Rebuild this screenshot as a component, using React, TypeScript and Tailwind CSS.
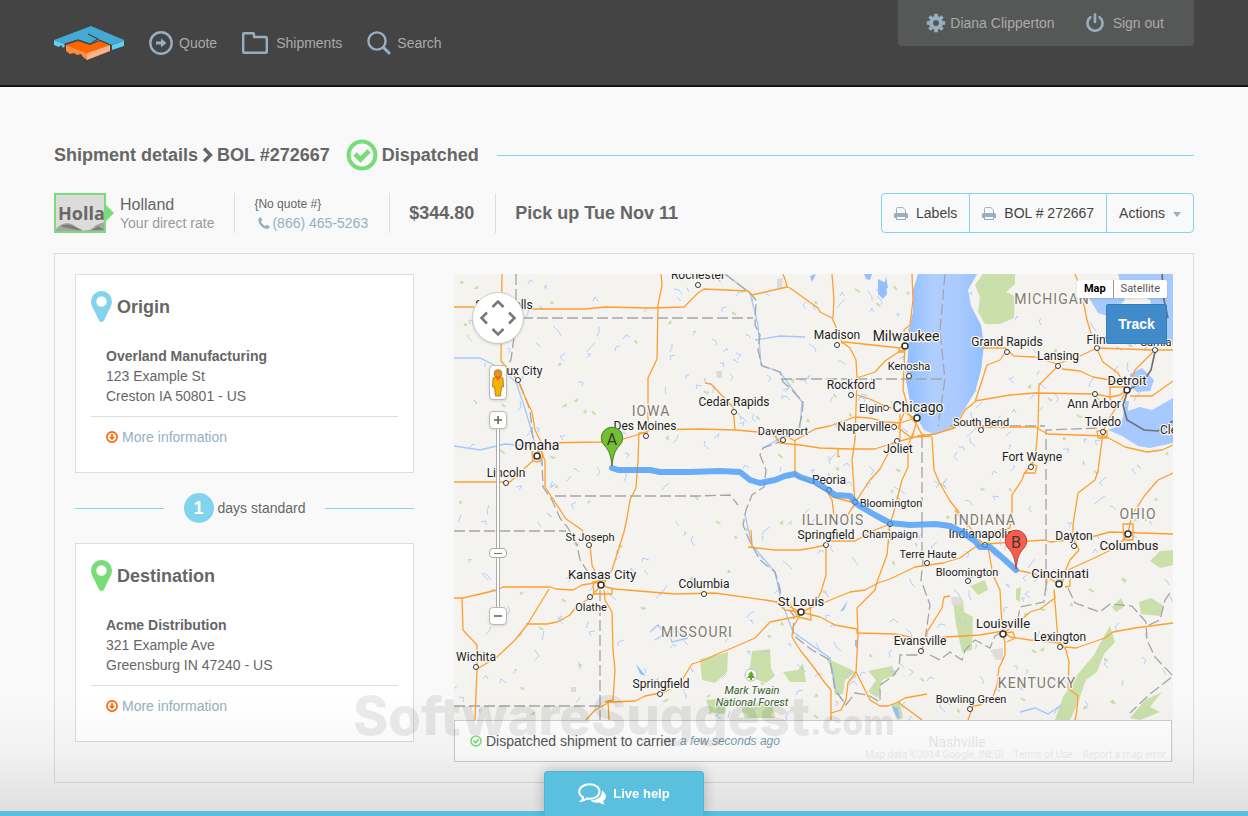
import type { ReactNode } from 'react';

interface Stop {
  title: string;
  pinClass: string;
  company: string;
  street: string;
  city: string;
}

interface City {
  name: string;
  x: number;
  y: number;
  size: number;
  dot?: [number, number];
}

const stops: Stop[] = [
  {
    title: 'Origin',
    pinClass: 'text-[#82d4ed]',
    company: 'Overland Manufacturing',
    street: '123 Example St',
    city: 'Creston IA 50801 - US',
  },
  {
    title: 'Destination',
    pinClass: 'text-[#78dd78]',
    company: 'Acme Distribution',
    street: '321 Example Ave',
    city: 'Greensburg IN 47240 - US',
  },
];

const cities: City[] = [
  { name: 'Rochester', x: 698, y: 279, size: 12, dot: [698, 285] },
  { name: 'Sioux Falls', x: 504, y: 309, size: 12 },
  { name: 'Sioux City', x: 516, y: 375, size: 12, dot: [518, 380] },
  { name: 'Des Moines', x: 645, y: 430, size: 12, dot: [646, 436] },
  { name: 'Omaha', x: 537, y: 450, size: 14, dot: [537, 456] },
  { name: 'Lincoln', x: 506, y: 477, size: 12, dot: [506, 483] },
  { name: 'Cedar Rapids', x: 734, y: 406, size: 12, dot: [734, 412] },
  { name: 'Davenport', x: 783, y: 435, size: 11, dot: [783, 440] },
  { name: 'Madison', x: 837, y: 339, size: 12, dot: [837, 345] },
  { name: 'Milwaukee', x: 906, y: 341, size: 14, dot: [905, 346] },
  { name: 'Kenosha', x: 909, y: 370, size: 11, dot: [909, 376] },
  { name: 'Rockford', x: 851, y: 389, size: 12, dot: [851, 395] },
  { name: 'Elgin', x: 871, y: 412, size: 11, dot: [886, 408] },
  { name: 'Chicago', x: 918, y: 412, size: 14, dot: [917, 418] },
  { name: 'Naperville', x: 864, y: 431, size: 12, dot: [894, 427] },
  { name: 'Joliet', x: 898, y: 453, size: 12, dot: [897, 441] },
  { name: 'Peoria', x: 829, y: 484, size: 12, dot: [829, 490] },
  { name: 'Bloomington', x: 891, y: 507, size: 11, dot: [855, 502] },
  { name: 'Springfield', x: 826, y: 539, size: 12, dot: [826, 545] },
  { name: 'Champaign', x: 890, y: 538, size: 11, dot: [890, 524] },
  { name: 'Terre Haute', x: 928, y: 558, size: 11, dot: [927, 563] },
  { name: 'Bloomington', x: 967, y: 576, size: 11, dot: [968, 581] },
  { name: 'Indianapolis', x: 981, y: 538, size: 12, dot: [985, 545] },
  { name: 'Grand Rapids', x: 1007, y: 346, size: 12, dot: [1007, 352] },
  { name: 'Lansing', x: 1058, y: 360, size: 12, dot: [1058, 366] },
  { name: 'Flint', x: 1098, y: 344, size: 12, dot: [1097, 348] },
  { name: 'Sarnia', x: 1156, y: 346, size: 11, dot: [1155, 350] },
  { name: 'Detroit', x: 1127, y: 385, size: 13, dot: [1127, 390] },
  { name: 'Ann Arbor', x: 1094, y: 408, size: 12, dot: [1095, 394] },
  { name: 'Toledo', x: 1103, y: 426, size: 12, dot: [1103, 432] },
  { name: 'South Bend', x: 981, y: 426, size: 11, dot: [981, 430] },
  { name: 'Fort Wayne', x: 1032, y: 461, size: 12, dot: [1031, 467] },
  { name: 'Cleveland', x: 1186, y: 434, size: 12 },
  { name: 'Dayton', x: 1074, y: 540, size: 12, dot: [1074, 546] },
  { name: 'Columbus', x: 1129, y: 550, size: 13, dot: [1128, 534] },
  { name: 'Cincinnati', x: 1060, y: 578, size: 13, dot: [1059, 584] },
  { name: 'Louisville', x: 1003, y: 628, size: 13, dot: [1003, 634] },
  { name: 'Lexington', x: 1060, y: 641, size: 12, dot: [1060, 647] },
  { name: 'Evansville', x: 920, y: 645, size: 12, dot: [921, 651] },
  { name: 'Bowling Green', x: 971, y: 703, size: 11, dot: [970, 709] },
  { name: 'Nashville', x: 957, y: 747, size: 14 },
  { name: 'St Joseph', x: 590, y: 541, size: 11, dot: [589, 545] },
  { name: 'Kansas City', x: 602, y: 579, size: 13, dot: [601, 585] },
  { name: 'Olathe', x: 591, y: 611, size: 11, dot: [590, 597] },
  { name: 'Columbia', x: 704, y: 588, size: 12, dot: [704, 594] },
  { name: 'St Louis', x: 801, y: 606, size: 13, dot: [801, 612] },
  { name: 'Wichita', x: 476, y: 661, size: 12, dot: [476, 667] },
  { name: 'Springfield', x: 661, y: 688, size: 12, dot: [660, 694] },
];

const states = [
  { name: 'IOWA', x: 651, y: 416 },
  { name: 'ILLINOIS', x: 833, y: 525 },
  { name: 'INDIANA', x: 985, y: 525 },
  { name: 'OHIO', x: 1138, y: 519 },
  { name: 'MICHIGAN', x: 1052, y: 304 },
  { name: 'MISSOURI', x: 697, y: 637 },
  { name: 'KENTUCKY', x: 1037, y: 688 },
];

const roads = [
  'M454 307H500L517 309H585L605 307L650 308L684 307L698 293L704 289L748 291L752 295L787 287L790 288L818 308L820 312L832 318L834 322L842 342L850 348L856 360L857 378L855 440L852 460L855 503',
  'M783 274L786 282L787 287M832 274L834 300L833 318',
  'M502 274L501 361L510 371L518 381L524 395L532 412L535 430L541 442L542 455L545 460L545 487L553 499L566 519L572 523L582 530L590 545L592 565L600 583',
  'M661 274L662 285L658 305L657 359L648 378L648 430L647 433L639 433L638 460L636 488L630 500L627 518L624 532L612 570L604 583',
  'M454 482H510L525 468L538 456L542 443L600 442L620 440L640 434L650 430L700 429L736 430L758 432L775 436L780 443L800 445L820 448L850 449L875 449L893 443L915 437L932 436',
  'M532 452Q540 446 543 455Q541 464 533 461ZM779 434L788 437L795 441V475L815 485L828 492L833 497L855 503M794 441L815 429L830 426L855 417L870 418L885 422L900 423L912 419M838 449V457L840 456',
  'M705 383L711 384L733 407L735 430M841 343L845 342L900 348L903 345M857 378L875 372L885 361L900 351L904 350M857 395L870 399L885 406L905 412L917 420',
  'M912 274L913 300L910 325L904 330L905 345L903 390L906 400L907 412L917 425L921 433L925 436M899 348V352H904M900 414V440M905 410L898 428L912 438L917 420M893 444L880 469L870 480L862 492L855 503M913 433L908 446V467L902 480L893 515L890 523L887 555L877 582',
  'M826 545L830 541L855 541L875 530L890 524M748 547L775 550L800 550L812 548L826 545M751 530L752 547M826 545V575L821 592L815 605L804 611M828 493L832 500L834 515M855 503L846 518',
  'M454 598L463 598L497 590L503 587H550L556 589L573 590L582 585L601 582L606 587L615 589L675 594L715 593L765 600L777 602L790 607L801 612L850 592L865 590L878 583L890 579L915 567L943 563L960 558L975 547L985 544L1045 540L1050 542L1085 538L1095 536L1110 532L1173 534',
  'M549 589L527 625L515 640L497 657L477 669L475 720M462 598L463 630L477 645V669M526 624L547 624L557 622L570 615L576 607L590 598L602 584M612 588V594L594 594L593 582L605 580',
  'M604 590L605 600L612 612L613 650L615 670L613 700L605 702M586 720L595 710L610 702L635 701L645 696L665 692L680 683L692 664L705 660L715 655L722 652L732 648L755 638L770 622L795 617L803 614M608 700L609 720',
  'M801 612L820 617L835 625L857 629L857 633L895 634L925 640L945 637L980 635L1003 631L1010 637L1030 640L1060 643M800 615L793 627L792 637L800 650L812 665L825 683L831 690V720M790 604L798 617L811 620L810 606M776 602L785 610L801 612',
  'M877 582L875 590L857 608L858 635L856 672L870 700L880 706L888 706L898 702L922 720M856 672L848 683L846 700L841 710L831 713M898 702L905 698L927 694M926 641L927 632L942 608L944 597L950 596',
  'M988 547L993 575L1000 590L1001 610L1003 633L1005 643L1005 655L999 668L997 685L993 697L980 705L973 706L968 720M1004 633L1013 632L1015 638L1007 642M1005 632L1020 621L1030 612L1040 609L1055 598L1054 590L1058 640L1066 650L1069 662L1068 688L1078 696L1077 710L1075 720M1065 647L1076 648L1105 638L1113 632L1135 628L1173 623',
  'M1016 570L1045 576L1059 584M1060 583L1070 560L1079 550L1073 538L1073 525L1078 493L1095 480L1098 471L1102 440L1103 432M1062 583L1068 570L1090 560L1115 548L1128 535M1128 533L1132 515L1145 495L1158 480L1173 473M1046 585L1047 578L1055 577M1065 587L1070 586L1070 578M1123 524H1133V540H1124Z',
  'M988 545L992 532L1010 528L1012 512L1012 495L1022 480L1024 474L1033 462L1036 450L1038 427L1039 385L1046 378L1058 366M1024 473L1035 473L1037 466L1030 463',
  'M917 436L935 434L960 425L978 427L1035 427L1048 434L1105 436L1125 447L1147 452L1162 450L1173 445M935 434L955 428L965 410L975 402L987 365L1000 360L1007 350M975 401L1010 395L1035 393L1095 394L1110 397L1120 395L1127 390',
  'M982 348L1005 348L1014 356L1035 357L1057 364L1080 356L1097 348L1155 350H1173M1062 369L1080 371L1093 377L1110 380L1120 386M1075 274L1080 287L1084 305L1087 320L1093 340L1097 349L1103 362L1118 373L1127 390L1118 405L1108 420L1103 432M1155 350L1135 370L1129 385M1130 396H1152L1173 381M1110 386V398L1114 407M1109 387H1126M1097 431H1107V438H1098Z',
  'M932 437L934 470L939 482L950 501L963 517L975 535L984 545M955 510L968 527',
];

const borders = [
  'M516 274V311M514 337L511 360L508 364M522 318H753M555 496L697 496L730 495L738 505M454 531H566M454 706H600M600 590V720',
  'M781 379H945L938 426M922 437V560M950 426H1045M1046 585V430L1100 428M945 274L940 330L945 380',
  'M520 384L530 410L533 440L542 460L543 487L552 500L560 518L568 528L577 545L580 560L588 572',
  'M725 274L750 293L756 300L755 325L760 335L758 350L762 366L780 372L783 382L790 388L803 402L802 415L799 427L785 440L763 448L760 455L766 470L764 487L752 495L746 510L743 525L750 542L760 560L775 572L779 585L782 600L794 616L793 635L812 650L830 660L835 690L846 705L855 693L868 695L880 702L880 685L892 677L899 668L900 655L920 655L925 640L930 605L921 580L923 560',
  'M930 655L940 660L950 652L962 660L965 650L975 640L990 648L995 636L1000 633M1046 585L1044 602L1020 607L1017 625M1068 588L1075 603L1100 612L1110 604L1132 606L1146 622L1147 640L1155 657L1173 676L1150 694L1130 713M1149 625L1160 620L1165 600L1172 590',
];

const forests = [
  'M983 274L975 285L980 297L978 312L985 324H1000L1014 318L1015 296L1006 292L1015 284V274Z',
  'M700 659L728 652L727 672L715 683L702 680Z',
  'M752 651L770 649L771 668L775 676L766 683L745 675L750 667Z',
  'M783 672L798 670L803 663L806 682L790 682Z',
  'M706 700L728 698L725 714L710 712ZM742 710L748 702L772 705L775 718H745Z',
  'M826 658L850 669L856 672L845 680L843 694L835 695L831 668Z',
  'M868 671L892 666L896 675L882 680L878 698L868 692L876 680Z',
  'M953 601L963 600L964 612L973 617L972 650L962 652L956 625Z',
  'M1110 626L1115 642L1104 654L1097 672L1086 680L1077 705L1070 720H1055L1063 697L1078 674L1094 655L1102 640Z',
  'M1139 602L1151 598L1164 606L1160 616L1141 614Z',
  'M1112 607L1121 598L1125 606L1116 612Z',
  'M1150 561L1160 551L1173 550V565L1160 568Z',
  'M970 586L985 580L988 590L978 595ZM1016 589L1021 587L1020 602L1016 600Z',
  'M1130 718L1145 700L1162 692L1150 707L1160 712L1140 720Z',
  'M891 705L900 702L903 718L897 720Z',
];

// cheap repeatable noise, keeps the small creeks and woods in place between renders
const scatter = (count: number, seed: number) => {
  let value = seed;
  const next = () => {
    value = (value * 16807) % 2147483647;
    return value / 2147483647;
  };
  return Array.from({ length: count }, () => {
    const x = 456 + Math.round(next() * 712);
    const y = 276 + Math.round(next() * 440);
    return { x, y, a: Math.round(next() * 12 - 6), b: Math.round(next() * 10 - 4), c: Math.round(next() * 10 - 5) };
  });
};

const creeks = scatter(330, 4711);
const woods = scatter(120, 977);

function Logo() {
  return (
    <svg viewBox="0 0 70 34" className="w-[70px] h-[34px]" aria-label="Home">
      <path d="M0 14L37 0L70 14V15L57 19L46 14L36 18L24 14L10 18Z" fill="#44a9d3" />
      <path d="M0 14L10 18L11 20L9 22L7 19L5 21L0 19Z" fill="#62d0f0" />
      <path d="M70 15V20L58 24V19Z" fill="#62d0f0" />
      <path d="M12 19L24 15L36 19L46 15L56 19L33 27Z" fill="#ff6600" />
      <path d="M12 19L33 27V34L29 31L27 28L23 29L20 27L16 28L12 25Z" fill="#ff8b3d" />
      <path d="M56 19V25L33 34V27Z" fill="#ffb184" />
      <path d="M34 8L44 13L36 18L24 14L11 18M45 14L57 19" fill="none" stroke="#444" strokeWidth="1.3" />
    </svg>
  );
}

function QuoteIcon() {
  return (
    <svg viewBox="0 0 24 24" className="w-6 h-6" fill="none" stroke="currentColor">
      <circle cx="12" cy="12" r="10.7" strokeWidth="2.4" />
      <path d="M7 12h6" strokeWidth="3" />
      <path d="M12 7.5L17.5 12L12 16.5Z" fill="currentColor" stroke="none" />
    </svg>
  );
}

function FolderIcon() {
  return (
    <svg viewBox="0 0 26 22" className="w-[26px] h-[22px]" fill="none" stroke="currentColor" strokeWidth="2.4" strokeLinejoin="round">
      <path d="M1.2 2.2Q1.2 1.2 2.2 1.2H11Q12 1.2 12 2.2V5H23.8Q24.8 5 24.8 6V19.8Q24.8 20.8 23.8 20.8H2.2Q1.2 20.8 1.2 19.8Z" />
    </svg>
  );
}

function SearchIcon() {
  return (
    <svg viewBox="0 0 24 24" className="w-6 h-6" fill="none" stroke="currentColor" strokeLinecap="round">
      <circle cx="10" cy="10" r="8.6" strokeWidth="2.4" />
      <path d="M16.5 16.5L22 22" strokeWidth="3" />
    </svg>
  );
}

function GearIcon() {
  return (
    <svg viewBox="0 0 20 20" className="w-5 h-5" fill="none" stroke="currentColor">
      <circle cx="10" cy="10" r="5" strokeWidth="4" />
      <path
        d="M10 .8V4M10 16V19.2M.8 10H4M16 10H19.2M3.5 3.5L5.8 5.8M14.2 14.2L16.5 16.5M3.5 16.5L5.8 14.2M14.2 5.8L16.5 3.5"
        strokeWidth="3.6"
      />
    </svg>
  );
}

function PowerIcon() {
  return (
    <svg viewBox="0 0 20 20" className="w-5 h-5" fill="none" stroke="currentColor" strokeWidth="2.6" strokeLinecap="round">
      <path d="M5.4 4.2A7.6 7.6 0 1 0 14.6 4.2" />
      <path d="M10 1.5V9" />
    </svg>
  );
}

function CheckCircle({ className }: { className: string }) {
  return (
    <svg viewBox="0 0 32 32" className={className} fill="none" stroke="#78dd78">
      <circle cx="16" cy="16" r="13.4" strokeWidth="4" />
      <path d="M9 15L14.5 20.5L23 12" strokeWidth="4.6" />
    </svg>
  );
}

function PinIcon({ className }: { className: string }) {
  return (
    <svg viewBox="0 0 21 31" className={`w-[21px] h-[31px] ${className}`}>
      <path
        fillRule="evenodd"
        fill="currentColor"
        d="M10.5 0A10.4 10.4 0 0 1 21 10.5C21 14 19 17.5 17.5 20L13 29.5Q10.5 32.5 8 29.5L3.5 20C2 17.5 0 14 0 10.5A10.4 10.4 0 0 1 10.5 0ZM10.5 5.3A5.2 5.2 0 1 0 10.5 15.7A5.2 5.2 0 1 0 10.5 5.3Z"
      />
    </svg>
  );
}

function PrinterIcon() {
  return (
    <svg viewBox="0 0 14 13" className="w-[14px] h-[13px]" fill="#97afc1">
      <path d="M2.5 6V1.5Q2.5 .6 3.4 .6H9L11.5 3V6" fill="none" stroke="#97afc1" />
      <path fillRule="evenodd" d="M1.5 6H12.5Q14 6 14 7.5V11H12V13H2V11H0V7.5Q0 6 1.5 6ZM3 10V12H11V10Z" />
    </svg>
  );
}

function PhoneIcon() {
  return (
    <svg viewBox="0 0 12 12" className="w-3 h-3" fill="currentColor">
      <path d="M.4 2.2C.8 .8 2 .2 3 .2L4.3 3.4L2.9 4.6C3.7 6.5 5.3 8.2 7.3 9L8.6 7.7L11.8 9.3C11.7 10.6 10.8 11.6 9.5 11.8C4.5 12 0 7 .4 2.2Z" />
    </svg>
  );
}

function DownCircle() {
  return (
    <svg viewBox="0 0 12 12" className="w-3 h-3" fill="none" stroke="#ff6600">
      <circle cx="6" cy="6" r="5.1" strokeWidth="1.6" />
      <path d="M6 2.8V6.5" strokeWidth="1.6" />
      <path d="M3 5.8H9L6 9.2Z" fill="#ff6600" stroke="none" />
    </svg>
  );
}

function ChatIcon() {
  return (
    <svg viewBox="0 0 28 22" className="w-7 h-[22px]">
      <path
        d="M11.5 1.2C17 1.2 21.5 4.4 21.5 8.5S17 15.8 11.5 15.8L9 15.6Q6.5 17.8 3.5 17.8Q5.3 16.2 5.2 14.4C2.7 13 1.2 11 1.2 8.5C1.2 4.4 6 1.2 11.5 1.2Z"
        fill="none"
        stroke="white"
        strokeWidth="2"
      />
      <path d="M24 7.5C29 11 29 15.5 25.2 18Q25.2 20 26.8 21.5Q23.5 21.5 21.5 19.5C18 20.2 14.5 19.5 12.5 17.5C19 17.5 24.5 13.5 24 7.5Z" fill="white" />
    </svg>
  );
}

function HollandLogo() {
  return (
    <div className="relative w-[52px] h-10 shrink-0">
      <div className="w-full h-full overflow-hidden border-2 border-[#78dd78] bg-[#dcdcdc]">
        <svg viewBox="0 0 48 36" className="w-12 h-9">
          <text x="2" y="25" fontFamily="Open Sans, sans-serif" fontWeight="700" fontSize="18" fill="#6b6767">
            Holla
          </text>
          <path d="M0 34Q10 23 20 32T40 30L48 27V36H0Z" fill="#a5a5a5" />
          <path d="M4 31Q12 27 22 33T42 31L48 35H30Q20 36 4 31Z" fill="#7d7d7d" />
        </svg>
      </div>
      <span className="absolute left-full top-3 border-y-8 border-l-8 border-y-transparent border-l-[#78dd78]" />
    </div>
  );
}

function Header() {
  return (
    <header className="bg-[#444] border-b-2 border-[#151515]">
      <div className="max-w-[1140px] mx-auto flex items-start justify-between">
        <nav className="h-[85px] flex items-center gap-[25px] text-[#aaa]">
          <a href="#home"><Logo /></a>
          <a href="#quote" className="flex items-center gap-1.5">
            <span className="text-[#97afc1]"><QuoteIcon /></span>
            Quote
          </a>
          <a href="#shipments" className="flex items-center gap-2">
            <span className="text-[#97afc1]"><FolderIcon /></span>
            Shipments
          </a>
          <a href="#search" className="flex items-center gap-1.5">
            <span className="text-[#97afc1]"><SearchIcon /></span>
            Search
          </a>
        </nav>
        <div className="h-[46px] flex items-center gap-[30px] pl-7 pr-[30px] rounded-b bg-[#565857] text-[#aaa]">
          <a href="#account" className="flex items-center gap-1">
            <span className="text-[#97afc1]"><GearIcon /></span>
            Diana Clipperton
          </a>
          <a href="#signout" className="flex items-center gap-2">
            <span className="text-[#97afc1]"><PowerIcon /></span>
            Sign out
          </a>
        </div>
      </div>
    </header>
  );
}

function TitleRow() {
  return (
    <div className="h-8 flex items-center text-lg font-bold text-[#666]">
      <h1 className="flex items-center gap-1">
        Shipment details
        <svg viewBox="0 0 11 16" className="w-[11px] h-4" fill="none" stroke="currentColor" strokeWidth="3.4">
          <path d="M2 1.5L8.5 8L2 14.5" />
        </svg>
        BOL #272667
      </h1>
      <CheckCircle className="w-8 h-8 ml-4 mr-1" />
      <span>Dispatched</span>
      <div className="flex-1 h-px ml-[18px] bg-[#82d4ed]" />
    </div>
  );
}

function Cell({ children }: { children: ReactNode }) {
  return <div className="h-10 flex items-center px-[19px] border-l border-[#ddd]">{children}</div>;
}

function SummaryRow() {
  return (
    <div className="mt-[22px] flex items-center justify-between text-[#666]">
      <div className="flex items-center">
        <HollandLogo />
        <div className="pl-[14px] pr-5">
          <p className="text-base leading-5">Holland</p>
          <p className="leading-4 text-[#999]">Your direct rate</p>
        </div>
        <Cell>
          <div className="pr-0.5">
            <p className="text-xs leading-5">{'{No quote #}'}</p>
            <a href="tel:8664655263" className="flex items-center gap-0.5 pl-1 leading-[18px] text-[#97afc1]">
              <PhoneIcon />
              (866) 465-5263
            </a>
          </div>
        </Cell>
        <Cell><strong className="text-lg pr-0.5">$344.80</strong></Cell>
        <Cell><strong className="text-lg">Pick up Tue Nov 11</strong></Cell>
      </div>
      <div className="h-10 flex rounded-sm border border-[#82d4ed] divide-x divide-[#82d4ed] text-[#444]">
        <button className="flex items-center gap-2 px-3">
          <PrinterIcon />
          Labels
        </button>
        <button className="flex items-center gap-2 px-3">
          <PrinterIcon />
          BOL # 272667
        </button>
        <button className="flex items-center gap-2 px-3">
          Actions
          <span className="mt-0.5 border-x-4 border-t-5 border-x-transparent border-t-[#97afc1]" />
        </button>
      </div>
    </div>
  );
}

function StopCard({ stop }: { stop: Stop }) {
  return (
    <section className="border border-[#ddd] bg-white px-[15px] pt-4 pb-[25px]">
      <h2 className="flex items-center gap-[5px] text-lg leading-7 font-bold text-[#666]">
        <PinIcon className={stop.pinClass} />
        {stop.title}
      </h2>
      <address className="not-italic leading-5 mt-6 pl-[15px] pb-[10px] border-b border-[#ddd]">
        <strong>{stop.company}</strong>
        <br />
        {stop.street}
        <br />
        {stop.city}
      </address>
      <a href="#more" className="mt-[10px] ml-[15px] flex items-center gap-1 leading-5 text-[#97afc1]">
        <DownCircle />
        More information
      </a>
    </section>
  );
}

function MapPin({ x, y, letter, fill, edge }: { x: number; y: number; letter: string; fill: string; edge: string }) {
  return (
    <g transform={`translate(${x} ${y})`}>
      <path d="M0 0C-1 -11 -3 -15 -7 -20A10.7 10.7 0 1 1 7 -20C3 -15 1 -11 0 0Z" fill={fill} stroke={edge} />
      <text y="-21" textAnchor="middle" fontSize="16" fill="#3c3c2c">
        {letter}
      </text>
    </g>
  );
}

function MapCanvas() {
  return (
    <svg
      viewBox="454 274 719 488"
      preserveAspectRatio="xMinYMin slice"
      className="w-full h-full"
      fontFamily="Roboto, sans-serif"
      role="img"
      aria-label="Route map"
    >
      <defs>
        <linearGradient id="lake" x1="0" x2="1" y1="0" y2="0">
          <stop offset="0" stopColor="#8ebdff" />
          <stop offset="0.35" stopColor="#b0cfff" />
          <stop offset="0.7" stopColor="#a9caff" />
          <stop offset="1" stopColor="#91bfff" />
        </linearGradient>
      </defs>
      <rect x="454" y="274" width="719" height="488" fill="#f4f3f0" />
      {forests.map((d) => (
        <path key={d} d={d} fill="#cadfaa" />
      ))}
      {woods.map((w, i) => (
        <path key={i} d={`M${w.x} ${w.y}l${w.a / 2} 2l2 ${w.b / 3}`} stroke="#cadfaa" strokeWidth="2" fill="none" />
      ))}
      {creeks.map((c, i) => (
        <path key={i} d={`M${c.x} ${c.y}l${c.a} ${c.b}l${c.c} 4`} stroke="#a9ccff" strokeWidth="0.9" fill="none" />
      ))}
      <g fill="none" stroke="#a2c8ff" strokeWidth="1.3">
        <path d="M454 358L480 358L500 368L516 382L526 412L534 440L542 465" />
        <path d="M454 446L480 450L505 444L530 446M725 274L750 293L758 325L761 365L780 372L802 402L800 427L763 448M755 340L780 336L805 337" />
        <path d="M745 515L752 545L775 572L781 600L793 632L830 658L836 690L846 705" />
        <path d="M650 632L658 625L665 634L675 628L682 636L695 632M655 640L668 632L672 642L688 638" />
        <path d="M1020 712L1035 708L1048 714L1060 706" />
      </g>
      <g fill="#94bfff">
        <path d="M878 279L886 283L887 294L883 299L878 294ZM810 276L816 274L812 282ZM864 274L872 274L870 280L866 279Z" />
        <path d="M886 277L883 290L888 288ZM840 612L848 600L844 610ZM855 640L858 640L857 648L855 646ZM636 664L646 676L640 674ZM892 706L898 708L900 720L896 716Z" />
      </g>
      <path
        d="M918 274L913 290L913 312L909 330L908 355L906 380L910 402L917 418L924 430L935 435L945 431L957 422L967 405L975 392L981 370L984 345L981 325L971 306L968 290L977 274Z"
        fill="url(#lake)"
      />
      <path d="M1088 296L1098 313L1108 316L1125 300L1118 274H1173V345L1160 338L1150 300L1125 285L1105 292Z" fill="#a6c9ff" />
      <path d="M1130 374L1142 368L1154 380L1150 391L1137 392L1130 386Z" fill="#a6c9ff" />
      <path d="M1124 412L1140 407L1152 410L1173 398V443L1150 448L1138 446L1122 436L1108 430L1121 425Z" fill="#a6c9ff" />
      <path d="M1127 401L1124 425L1133 440" fill="none" stroke="#a6c9ff" strokeWidth="4" />
      <path d="M777 279L783 278L782 288H777ZM951 597H962V605H952ZM990 650L1003 648V660L996 660ZM716 371H722V378H717ZM571 687H576V692H571Z" fill="#dedbd8" />
      {borders.map((d) => (
        <path key={d} d={d} fill="none" stroke="#a5a5a5" strokeWidth="1.3" strokeDasharray="11 4" />
      ))}
      <path
        d="M1162 274L1164 300L1168 318M1155 352L1151 370L1143 382L1128 390L1123 405L1127 420L1144 430L1158 431L1173 421"
        fill="none"
        stroke="#707070"
        strokeWidth="1.7"
      />
      {roads.map((d) => (
        <path key={d} d={d} fill="none" stroke="#ff9f2e" strokeWidth="1.3" strokeLinejoin="round" />
      ))}
      {cities.map(({ name, x, dot, size }) =>
        dot ? (
          <circle key={name + x} cx={dot[0]} cy={dot[1]} r={size > 12 ? 3 : 2.5} fill="white" stroke="#333" strokeWidth={size > 12 ? 1.5 : 1} />
        ) : null,
      )}
      <g textAnchor="middle" fill="#1d1d1d" stroke="#f8f7f5" strokeWidth="2.5" strokeLinejoin="round" paintOrder="stroke">
        {cities.map(({ name, x, y, size }) => (
          <text key={name + x} x={x} y={y} fontSize={size}>
            {name}
          </text>
        ))}
        {states.map(({ name, x, y }) => (
          <text key={name} x={x} y={y} fontSize="14" letterSpacing="1" fill="#827c70">
            {name}
          </text>
        ))}
        <g fill="#38622f" fontSize="11" fontStyle="italic">
          <text x="752" y="694">Mark Twain</text>
          <text x="752" y="706">National Forest</text>
        </g>
      </g>
      <circle cx="751" cy="675" r="6" fill="white" stroke="#bbb" />
      <path d="M751 671L754 675H753L755 678H752V680H750V678H747L749 675H748Z" fill="#5cae27" />
      <path
        d="M612 468L618 470H650L660 472H690L720 471L740 472L750 480L760 483L775 480L785 476L795 474L800 477L815 482L828 490L835 495L850 496L858 505L875 515L890 523L910 525L935 524L950 526L962 532L975 541L980 547L990 547L1005 560L1016 570"
        fill="none"
        stroke="#3c96f8"
        strokeOpacity="0.75"
        strokeWidth="6"
        strokeLinejoin="round"
        strokeLinecap="round"
      />
      <MapPin x={612} y={466} letter="A" fill="#72bf33" edge="#4b7d28" />
      <MapPin x={1016} y={569} letter="B" fill="#f95c50" edge="#b8423a" />
      <text x="1166" y="758" textAnchor="end" fontSize="10" fill="#444" xmlSpace="preserve">
        Map data ©2014 Google, INEGI    Terms of Use    Report a map error
      </text>
    </svg>
  );
}

function Chevron({ d }: { d: string }) {
  return (
    <svg viewBox="0 0 14 14" className="w-[14px] h-[14px]" fill="none" stroke="#777" strokeWidth="2.5">
      <path d={d} />
    </svg>
  );
}

function MapControls() {
  return (
    <div className="absolute left-[18px] top-[18px] flex flex-col items-center">
      <div className="w-[52px] h-[52px] p-1 grid grid-cols-3 grid-rows-3 place-items-center rounded-full bg-white border border-[#ccc] shadow">
        <button aria-label="Pan up" className="col-start-2"><Chevron d="M1.5 10L7 4.5L12.5 10" /></button>
        <button aria-label="Pan left" className="col-start-1 row-start-2"><Chevron d="M10 1.5L4.5 7L10 12.5" /></button>
        <button aria-label="Pan right" className="col-start-3 row-start-2"><Chevron d="M4 1.5L9.5 7L4 12.5" /></button>
        <button aria-label="Pan down" className="col-start-2 row-start-3"><Chevron d="M1.5 4L7 9.5L12.5 4" /></button>
      </div>
      <button aria-label="Street view" className="mt-[21px] w-[18px] h-[35px] flex items-center justify-center rounded-sm bg-white border border-[#bbb] shadow">
        <svg viewBox="0 0 12 28" className="w-3 h-7" fill="#f4b400" stroke="#a8691c" strokeWidth="0.8">
          <path d="M1 9Q6 5 11 9L11.5 18H9.5L8.5 27H3.5L2.5 18H.5Z" />
          <circle cx="6" cy="4.5" r="3.8" fill="#e8941a" />
          <path d="M3 8H9L6 12Z" fill="#ff5c39" stroke="none" />
        </svg>
      </button>
      <button aria-label="Zoom in" className="mt-[11px] w-[18px] h-[18px] flex items-center justify-center rounded-sm bg-white border border-[#bbb] shadow">
        <svg viewBox="0 0 8 8" className="w-2 h-2" stroke="#666" strokeWidth="1.6"><path d="M0 4H8M4 0V8" /></svg>
      </button>
      <input
        type="range"
        aria-label="Zoom level"
        defaultValue={29}
        className="w-[18px] h-[178px] appearance-none bg-transparent [writing-mode:vertical-lr] [direction:rtl] bg-[linear-gradient(to_right,transparent_7px,#aaa_7px,#aaa_8px,#fff_8px,#fff_10px,#aaa_10px,#aaa_11px,transparent_11px)] [&::-webkit-slider-thumb]:appearance-none [&::-webkit-slider-thumb]:w-[18px] [&::-webkit-slider-thumb]:h-[10px] [&::-webkit-slider-thumb]:rounded-sm [&::-webkit-slider-thumb]:border [&::-webkit-slider-thumb]:border-[#aaa] [&::-webkit-slider-thumb]:bg-[linear-gradient(#777,#777)] [&::-webkit-slider-thumb]:bg-white [&::-webkit-slider-thumb]:bg-[length:8px_1px] [&::-webkit-slider-thumb]:bg-center [&::-webkit-slider-thumb]:bg-no-repeat"
      />
      <button aria-label="Zoom out" className="w-[18px] h-[18px] flex items-center justify-center rounded-sm bg-white border border-[#bbb] shadow">
        <svg viewBox="0 0 8 8" className="w-2 h-2" stroke="#666" strokeWidth="1.6"><path d="M0 4H8" /></svg>
      </button>
    </div>
  );
}

function RouteMap() {
  return (
    <div className="relative flex-1 h-[488px] overflow-hidden">
      <MapCanvas />
      <MapControls />
      <div className="absolute right-[6px] top-[6px] flex flex-col items-end gap-[6px]">
        <div className="flex h-[18px] divide-x divide-[#999] bg-white rounded-xs shadow font-[Roboto,sans-serif] text-[11px]">
          <button className="px-[7px] font-bold text-black">Map</button>
          <button className="px-[7px] text-[#555]">Satellite</button>
        </div>
        <button className="w-[61px] h-10 rounded-xs border border-[#357ebd] bg-[#428bca] font-bold text-white">
          Track
        </button>
      </div>
      <div className="absolute left-0 right-px bottom-0 h-[42px] px-[15px] flex items-center gap-1 border border-[#ccc] bg-white/90 text-[#555]">
        <CheckCircle className="w-3 h-3" />
        Dispatched shipment to carrier
        <em className="text-xs text-[#7f9bb0]">a few seconds ago</em>
      </div>
    </div>
  );
}

function Watermark() {
  return (
    <div
      aria-hidden="true"
      className="pointer-events-none fixed inset-x-0 bottom-[61px] flex items-baseline justify-center font-[Inter,sans-serif] font-extrabold leading-[64px] text-black/8"
    >
      <span className="text-[53px]">SoftwareSuggest</span>
      <span className="text-[34px]">.com</span>
    </div>
  );
}

function LiveHelpBar() {
  return (
    <div className="fixed inset-x-0 bottom-0 h-[120px] flex flex-col items-center justify-end border-b-5 border-[#5bc0de] bg-linear-to-b from-transparent via-black/3 to-black/10">
      <button className="-mb-[5px] w-40 h-[45px] flex items-center justify-center gap-[7px] rounded-t border border-b-0 border-[#46b8da] bg-[#5bc0de] text-[13px] font-bold text-white shadow-[0_0_14px_rgba(0,0,0,0.25)]">
        <ChatIcon />
        Live help
      </button>
    </div>
  );
}

export default function App() {
  return (
    <div className="min-h-screen bg-[#f9f9f9] font-['Liberation_Sans',Arial,sans-serif] text-sm text-[#666]">
      <Header />
      <main className="max-w-[1140px] mx-auto pt-[52px] pb-[33px]">
        <TitleRow />
        <SummaryRow />
        <div className="mt-5 p-5 flex items-start gap-10 border border-[#ddd]">
          <div className="w-[339px] shrink-0 flex flex-col gap-5">
            <StopCard stop={stops[0]} />
            <div className="h-[30px] flex items-center gap-5">
              <div className="flex-1 h-px bg-[#82d4ed]" />
              <div className="flex items-center gap-1">
                <span className="w-[30px] h-[30px] flex items-center justify-center rounded-full bg-[#82d4ed] text-lg font-bold text-white">
                  1
                </span>
                days standard
              </div>
              <div className="flex-1 h-px bg-[#82d4ed]" />
            </div>
            <StopCard stop={stops[1]} />
          </div>
          <RouteMap />
        </div>
      </main>
      <Watermark />
      <LiveHelpBar />
    </div>
  );
}
